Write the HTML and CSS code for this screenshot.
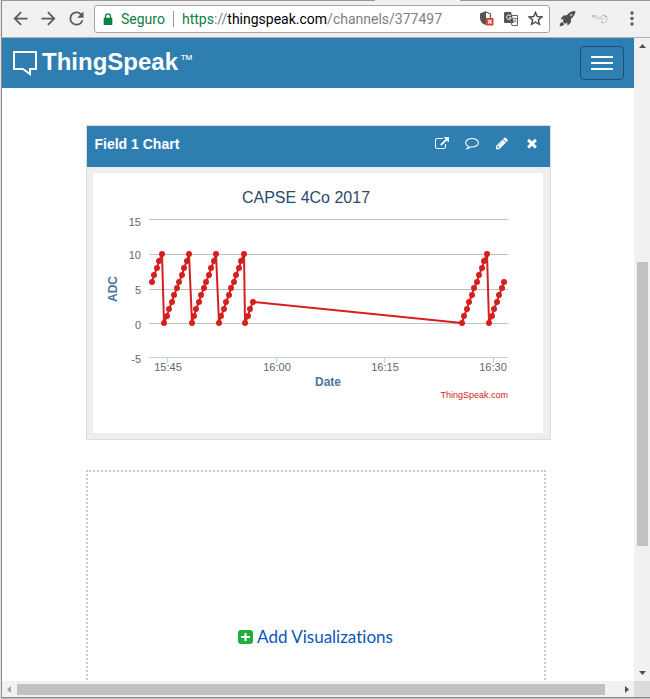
FILE: index.html
```html
<!DOCTYPE html>
<html lang="es">
<head>
<meta charset="utf-8">
<title>ThingSpeak</title>
<link rel="stylesheet" href="styles.css">
</head>
<body>
<div class="toolbar">
  <button class="tool" aria-label="Atrás"><svg width="21" height="21" viewBox="0 0 24 24"><path d="M20 11H7.83l5.59-5.59L12 4l-8 8 8 8 1.41-1.41L7.83 13H20v-2z"/></svg></button>
  <button class="tool" aria-label="Adelante"><svg width="21" height="21" viewBox="0 0 24 24"><path d="M4 11h12.17l-5.59-5.59L12 4l8 8-8 8-1.41-1.41L16.17 13H4v-2z"/></svg></button>
  <button class="tool" aria-label="Recargar"><svg width="21" height="21" viewBox="0 0 24 24"><path d="M17.65 6.35A7.958 7.958 0 0 0 12 4a8 8 0 1 0 7.73 10h-2.08A5.99 5.99 0 0 1 12 18a6 6 0 1 1 0-12c1.66 0 3.14.69 4.22 1.78L13 11h7V4z"/></svg></button>
  <div class="omnibox">
    <svg class="lock" width="10" height="12" viewBox="0 0 10 12"><path d="M1 5h8v7H1z" stroke="#0b8043" stroke-linejoin="round" fill="#0b8043" stroke-width="0.6"/><path d="M2.500 5V3.300a2.500 2.500 0 0 1 5 0V5" fill="none" stroke="#0b8043" stroke-width="1.300"/></svg>
    <span class="secure">Seguro</span>
    <div class="url" role="textbox" aria-label="Dirección" contenteditable="true" spellcheck="false"><span class="scheme">https</span>://<span class="host">thingspeak.com</span>/channels/377497</div>
    <button class="mini" aria-label="Contenido bloqueado"><svg width="14" height="15" viewBox="0 0 14 15"><path d="M6 0L0 2.500V7c0 3 2 6 6 7z" fill="#555"/><path d="M6 1l4.500 1.800V7M6 13.500l1-.5" fill="none" stroke="#555" stroke-width="1.200"/><path d="M6 7h7.500v7.500H6z" fill="#db4437"/><path d="M8 9l3.500 3.500M11.500 9L8 12.500" stroke="#fff" stroke-width="1.200"/></svg></button>
    <button class="mini" aria-label="Traducir"><svg width="14" height="14" viewBox="0 0 14 14"><path d="M5 3.500h8.500v10H8z" fill="#fff" stroke="#666"/><path d="M1 0h6l3 11H1a1 1 0 0 1-1-1V1a1 1 0 0 1 1-1z" fill="#555"/><path d="M6.800 3.800a2.300 2.300 0 1 0 .4 2H5" fill="none" stroke="#fff"/><path d="M9 6.500h4M11 5.500v1M12.300 6.500c-.5 2-1.500 3-2.500 4M10 7.500l2.500 3" fill="none" stroke="#777" stroke-width=".8"/></svg></button>
    <button class="mini" aria-label="Marcador"><svg width="15" height="15" viewBox="0 0 15 15"><path d="M7.500 1.500l1.800 4.100 4.500.4-3.400 2.900 1 4.400-3.900-2.300-3.900 2.300 1-4.400L1.200 6l4.500-.4z" fill="none" stroke="#505050" stroke-width="1.500"/></svg></button>
  </div>
  <button class="tool" aria-label="Rocket"><svg width="17" height="16" viewBox="0 0 17 16"><path d="M16.500 0c-4 0-6.500 1.500-8.800 4.200L4.300 4.600 1.500 8.300l3.200.1-1 2 2.600 2.300 1.900-1.200.3 3.300 3.400-3.200.1-3.600c2.600-2.300 4.300-4.300 4.500-8z" fill="#505050"/><circle cx="12.300" cy="4" r="1.300" fill="#aaa"/><path d="M3 11c-1.500.5-2 2-2.500 4.500C3 15 4.500 14.500 5.500 13z" fill="#505050"/></svg></button>
  <button class="tool" aria-label="Extensión"><svg width="18" height="14" viewBox="0 0 18 14"><path d="M1 4h5l1 1.500 3-.5 2-2 4.500 3-1 4-3.500 1-2-2 2.500-2.500-5 .5-4-1z" fill="#eee" stroke="#d0d0d0"/><path d="M1 4h4M12 3l4 2M10 10l2 1" stroke="#aaa" fill="none"/></svg></button>
  <button class="tool" aria-label="Menú"><svg width="4" height="15" viewBox="0 0 4 15"><circle cx="2" cy="2" r="1.700"/><circle cx="2" cy="7.500" r="1.700"/><circle cx="2" cy="13" r="1.700"/></svg></button>
</div>
<div class="viewport">
  <div class="page">
    <header class="navbar">
      <a class="brand" href="#"><svg width="26" height="26" viewBox="0 0 26 26"><path d="M2 2h22v17h-6v5l-7-5H2z" fill="none" stroke="#fff" stroke-width="2"/></svg><span class="name">ThingSpeak</span><span class="tm">™</span></a>
      <button class="burger" aria-label="Toggle navigation"><i></i><i></i><i></i></button>
    </header>
    <main class="content">
      <section class="panel">
        <div class="panel-head">
          <h2>Field 1 Chart</h2>
          <a href="#" aria-label="Open chart"><svg width="14" height="14" viewBox="0 0 1792 1792"><path d="M1408 928v320q0 119-84.500 203.500t-203.500 84.500h-832q-119 0-203.500-84.500t-84.500-203.500v-832q0-119 84.500-203.500t203.500-84.500h704q14 0 23 9t9 23v64q0 14-9 23t-23 9h-704q-66 0-113 47t-47 113v832q0 66 47 113t113 47h832q66 0 113-47t47-113v-320q0-14 9-23t23-9h64q14 0 23 9t9 23zm384-864v512q0 26-19 45t-45 19-45-19l-176-176-652 652q-10 10-23 10t-23-10l-114-114q-10-10-10-23t10-23l652-652-176-176q-19-19-19-45t19-45 45-19h512q26 0 45 19t19 45z"/></svg></a>
          <a href="#" aria-label="Comment"><svg width="14" height="14" viewBox="0 0 14 14"><path d="M7 1.500c3.500 0 6.400 1.800 6.400 4.200S10.500 10 7 10l-1.300-.1C4.600 11 3.300 11.500 2 11.700c.8-.7 1.200-1.400 1.300-2.400C1.600 8.500.6 7.200.6 5.700.6 3.300 3.500 1.500 7 1.500z" fill="none" stroke="#fff" stroke-width="1.100"/></svg></a>
          <a href="#" aria-label="Edit"><svg width="14" height="14" viewBox="0 100 1792 1792"><path d="M491 1536l91-91-235-235-91 91v107h128v128h107zm523-928q0-22-22-22-10 0-17 7l-542 542q-7 7-7 17 0 22 22 22 10 0 17-7l542-542q7-7 7-17zm-54-192l416 416-832 832h-416v-416zm683 96q0 53-37 90l-166 166-416-416 166-165q36-38 90-38 53 0 91 38l235 234q37 39 37 91z"/></svg></a>
          <a href="#" aria-label="Close"><svg width="14" height="14" viewBox="0 100 1792 1792"><path d="M1490 1322q0 40-28 68l-136 136q-28 28-68 28t-68-28l-294-294-294 294q-28 28-68 28t-68-28l-136-136q-28-28-28-68t28-68l294-294-294-294q-28-28-28-68t28-68l136-136q28-28 68-28t68 28l294 294 294-294q28-28 68-28t68 28l136 136q28 28 28 68t-28 68l-294 294 294 294q28 28 28 68z"/></svg></a>
        </div>
        <div class="panel-body">
          <svg class="chart" viewBox="0 0 450 260" role="img" aria-label="CAPSE 4Co 2017">
            <defs><marker id="dot" markerUnits="userSpaceOnUse" markerWidth="8" markerHeight="8" refX="4" refY="4"><circle cx="4" cy="4" r="3" fill="#d62020"/></marker></defs>
            <g class="grid"><path d="M56 46.500h359M56 81.500h359M56 116.500h359M56 150.500h359"/></g>
            <path class="axis" d="M56 184.500h359M74.500 185v5M183.500 185v5M291.500 185v5M400.500 185v5"/>
            <polyline class="series" points="59,109 61,102 64,95 66,88 69,81 71,150 74,143 76,136 79,129 81,122 84,115 86,109 89,102 91,95 94,88 96,81 99,150 101,143 103,136 106,129 108,122 111,115 113,109 116,102 118,95 121,88 123,81 126,150 128,143 131,136 133,129 136,122 138,115 141,109 143,102 146,95 148,88 151,81 152,150 155,143 157,136 160,129 369,150 371,143 374,136 376,129 379,122 381,115 384,109 386,102 389,95 391,88 394,81 396,150 399,143 401,136 404,129 406,122 409,115 411,109"/>
            <text class="title" x="213" y="30">CAPSE 4Co 2017</text>
            <g class="labels end"><text x="48" y="53">15</text><text x="48" y="86">10</text><text x="48" y="121">5</text><text x="48" y="156">0</text><text x="48" y="190">-5</text></g>
            <g class="labels mid"><text x="75" y="198">15:45</text><text x="184" y="198">16:00</text><text x="292" y="198">16:15</text><text x="400" y="198">16:30</text></g>
            <text class="axis-title" x="235" y="213">Date</text>
            <text class="axis-title" transform="translate(24 116) rotate(-90)">ADC</text>
            <text class="credit" x="415" y="225">ThingSpeak.com</text>
          </svg>
        </div>
      </section>
      <section class="dropzone">
        <a class="add" href="#"><svg width="15" height="14" viewBox="0 0 15 14"><rect width="15" height="14" rx="3" fill="#21ae3c"/><path d="M7.500 3v8M3 7h9" stroke="#fff" stroke-width="2"/></svg>Add Visualizations</a>
      </section>
    </main>
  </div>
  <div class="vbar"><svg width="7" height="4" viewBox="0 0 7 4"><path d="M3.500 0L7 4H0z"/></svg><div class="vtrack"><div class="vthumb"></div></div><svg width="7" height="4" viewBox="0 0 7 4"><path d="M0 0h7L3.500 4z"/></svg></div>
  <div class="hbar"><svg width="4" height="7" viewBox="0 0 4 7"><path d="M4 0v7L0 3.500z" fill="#a0a0a0"/></svg><div class="hthumb"></div><svg width="4" height="7" viewBox="0 0 4 7"><path d="M0 0l4 3.500L0 7z"/></svg></div>
  <div class="corner"></div>
</div>
</body>
</html>
```
FILE: styles.css
```css
* { box-sizing: border-box; }
body {
  margin: 0;
  height: 100vh;
  display: flex;
  flex-direction: column;
  overflow: hidden;
  border-left: 1px solid #e4e4e4;
  border-bottom: 1px solid #bbb;
  background: #f1f1f1;
  font-family: "Liberation Sans", Arial, sans-serif;
}
svg { display: block; }
button { border: 0; padding: 0; background: none; }
a { text-decoration: none; }

.toolbar {
  display: flex;
  align-items: center;
  height: 38px;
  padding: 0 8px;
  gap: 7px;
  border-left: 1px solid #8a8a8a;
  border-bottom: 1px solid #b0b0b0;
  background:
    linear-gradient(#999, #999) 0 0 / 373px 1px no-repeat,
    linear-gradient(#999, #999) 458px 0 / 100% 1px no-repeat,
    #f1f1f1;
}
.tool {
  display: flex;
  align-items: center;
  justify-content: center;
  min-width: 21px;
  fill: #5a5a5a;
}
.toolbar > .tool:last-child { margin-left: 4px; }
.omnibox + .tool + .tool { margin-left: 4px; }
.omnibox {
  flex: 1;
  display: flex;
  align-items: center;
  height: 28px;
  min-width: 0;
  padding: 0 6px 0 8px;
  border: 1px solid #a6a6a6;
  border-radius: 3px;
  background: #fff;
  font: 14px/20px Roboto, "Noto Sans", sans-serif;
}
.secure {
  margin-left: 8px;
  padding-right: 8px;
  border-right: 1px solid #999;
  line-height: 16px;
  color: #0b8043;
}
.url {
  flex: 1;
  min-width: 0;
  margin-left: 8px;
  overflow: hidden;
  white-space: nowrap;
  color: #808080;
  outline: 0;
}
.scheme { color: #0b8043; }
.host { color: #000; }
.mini { margin-left: 10px; }

.viewport {
  flex: 1;
  min-height: 0;
  display: grid;
  grid-template-columns: minmax(0, 1fr) 16px;
  grid-template-rows: minmax(0, 1fr) 16px;
  border-left: 1px solid #8a8a8a;
  border-bottom: 1px solid #8a8a8a;
}
.page { overflow: hidden; background: #fff; }
.navbar {
  display: flex;
  align-items: center;
  justify-content: space-between;
  height: 50px;
  padding: 0 10px;
  background: #2e7eb2;
}
.brand { display: flex; color: #fff; }
.name { margin-left: 4px; font-weight: bold; font-size: 24px; line-height: 24px; }
.tm { font-size: 13px; line-height: 20px; margin-left: 2px; }
.burger {
  display: flex;
  flex-direction: column;
  align-items: center;
  justify-content: center;
  gap: 4px;
  width: 44px;
  height: 34px;
  border: 1px solid #1c5075;
  border-radius: 4px;
}
.burger i { width: 22px; height: 2px; background: #fff; }

.content { max-width: 465px; margin: 37px auto 0; }
.panel { border: 1px solid #ddd; background: #eee; }
.panel-head {
  display: flex;
  align-items: center;
  gap: 16px;
  height: 41px;
  padding: 0 11px 5px 8px;
  background: #2e7eb2;
  fill: #fff;
}
.panel-head h2 { flex: 1; margin: 0; font-size: 14px; line-height: 20px; color: #fff; }
.panel-body { padding: 6px 7px 6px 6px; }
.chart { width: 100%; height: auto; background: #fff; }
.grid { stroke: #c0c0c0; }
.axis { fill: none; stroke: #c0d0e0; }
.series {
  fill: none;
  stroke: #d62020;
  stroke-width: 2;
  stroke-linejoin: round;
  marker: url(#dot);
}
.title { font-size: 16px; fill: #274b6d; text-anchor: middle; }
.labels { font-size: 11px; fill: #666; }
.end { text-anchor: end; }
.mid { text-anchor: middle; }
.axis-title { font-size: 12px; font-weight: bold; fill: #4d759e; text-anchor: middle; }
.credit { font-size: 9px; fill: #d62020; text-anchor: end; }

.dropzone {
  display: flex;
  align-items: center;
  justify-content: center;
  height: 334px;
  margin: 30px 5px 0 0;
  border: 2px dotted #ccc;
}
.add {
  display: flex;
  align-items: center;
  gap: 4px;
  font: 17px/20px Lato, sans-serif;
  font-variant-ligatures: none;
  color: #0b57b7;
}

.vbar, .hbar { display: flex; align-items: center; background: #f1f1f1; fill: #505050; }
.vbar { flex-direction: column; padding: 6px 0; }
.vtrack { flex: 1; width: 11px; }
.vthumb { height: 284px; margin-top: 214px; background: #c1c1c1; }
.hbar { padding: 0 5px; gap: 6px; }
.hthumb { flex: 1; height: 11px; margin-right: 14px; background: #c1c1c1; }
.corner { background: #dcdcdc; }
```
